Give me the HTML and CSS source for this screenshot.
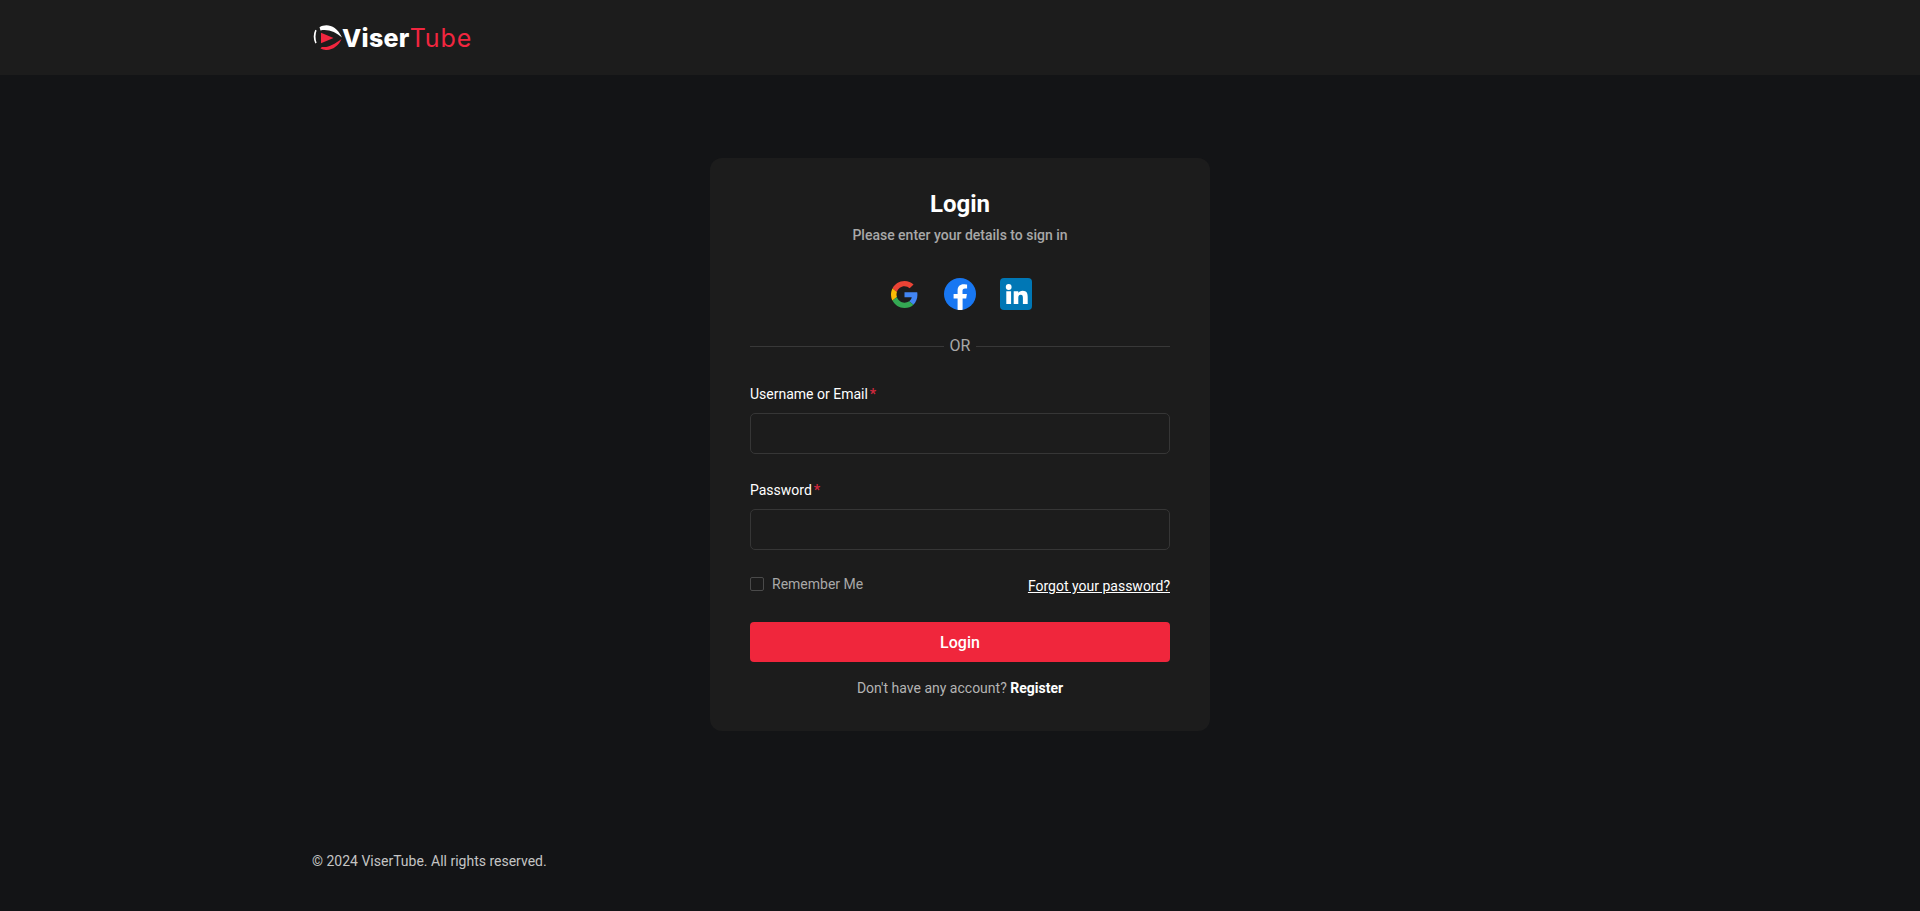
FILE: index.html
```html
<!DOCTYPE html>
<html>
  <head>
    <title>Login - ViserTube</title>
    <link rel="stylesheet" href="styles.css">
  </head>
  <body>
    <header class="topbar">
      <div class="container">
        <a class="logo" href="#">
          <svg class="logo-icon" viewBox="0 0 30 25" width="30" height="25">
            <path d="M2.300 4.800Q-.9 11.500 2.300 18.500L3.600 17.700Q1.400 11.500 3.600 5.600Z" fill="#fff"/>
            <path d="M6.500 2.200C13 -1.600 23 -.5 29 12.600 23 6.800 15 3.800 7.500 5.400Z" fill="#fff"/>
            <path d="M28.500 14C25 23 15 27.500 7.500 23.600L8.800 21.900C15 23 21 19.500 28.500 14Z" fill="#f1263f"/>
            <path d="M8 7.800 20.500 13 8 18.300Z" fill="#f1263f"/>
          </svg>
          <span class="logo-text"><b>Viser</b><span>Tube</span></span>
        </a>
      </div>
    </header>

    <main class="main">
      <div class="card">
        <h2 class="card-title">Login</h2>
        <p class="card-sub">Please enter your details to sign in</p>

        <div class="social">
          <a href="#" class="social-link">
            <svg viewBox="0 0 48 48" width="27" height="27">
              <path fill="#EA4335" d="M24 9.500c3.540 0 6.710 1.220 9.210 3.600l6.850-6.850C35.900 2.380 30.470 0 24 0 14.620 0 6.510 5.380 2.560 13.220l7.980 6.190C12.430 13.720 17.740 9.500 24 9.500z"/>
              <path fill="#4285F4" d="M46.980 24.550c0-1.570-.15-3.090-.38-4.550H24v9.020h12.940c-.58 2.960-2.260 5.480-4.780 7.180l7.730 6c4.510-4.180 7.090-10.360 7.090-17.650z"/>
              <path fill="#FBBC05" d="M10.530 28.590c-.48-1.450-.76-2.990-.76-4.590s.27-3.140.76-4.590l-7.980-6.190C.92 16.460 0 20.120 0 24c0 3.880.92 7.540 2.560 10.780l7.970-6.190z"/>
              <path fill="#34A853" d="M24 48c6.480 0 11.930-2.130 15.890-5.810l-7.730-6c-2.150 1.450-4.920 2.300-8.160 2.300-6.260 0-11.570-4.220-13.470-9.910l-7.980 6.190C6.510 42.620 14.620 48 24 48z"/>
            </svg>
          </a>
          <a href="#" class="social-link">
            <svg viewBox="0 0 32 32" width="32" height="32">
              <circle cx="16" cy="16" r="16" fill="#1877f2"/>
              <path fill="#fff" d="M22.200 20.600l.7-4.600h-4.400v-3c0-1.300.6-2.500 2.600-2.500h2v-3.900s-1.800-.3-3.500-.3c-3.600 0-6 2.200-6 6.200V16h-4v4.600h4v11.200c.8.100 1.600.2 2.500.2s1.700-.1 2.500-.2V20.600z"/>
            </svg>
          </a>
          <a href="#" class="social-link">
            <svg viewBox="0 0 32 32" width="32" height="32">
              <rect width="32" height="32" rx="4" fill="#0077b5"/>
              <circle cx="8.700" cy="9" r="2.900" fill="#fff"/>
              <path fill="#fff" d="M6.300 13.200h4.800V26H6.300zM13.700 13.200h4.600v1.800c.7-1.200 2.300-2.200 4.300-2.200 4.300 0 5.100 2.800 5.100 6.500V26h-4.800v-5.800c0-1.700-.1-3.500-2.200-3.500s-2.400 1.600-2.400 3.400V26h-4.600z"/>
            </svg>
          </a>
        </div>

        <div class="or-line"><span>OR</span></div>

        <form class="form">
          <div class="field">
            <label for="username">Username or Email<span class="req">*</span></label>
            <input type="text" id="username">
          </div>
          <div class="field">
            <label for="password">Password<span class="req">*</span></label>
            <input type="password" id="password">
          </div>
          <div class="form-row">
            <label class="remember"><input type="checkbox" id="remember">Remember Me</label>
            <a href="#" class="forgot">Forgot your password?</a>
          </div>
          <button type="button" class="btn-login">Login</button>
        </form>

        <p class="register">Don't have any account? <a href="#">Register</a></p>
      </div>
    </main>

    <footer class="footer">
      <div class="container">
        <p>&copy; 2024 ViserTube. All rights reserved.</p>
      </div>
    </footer>
  </body>
</html>
```

FILE: styles.css
```css
* {
  box-sizing: border-box;
}

body {
  margin: 0;
  min-height: 911px;
  display: flex;
  flex-direction: column;
  background-color: #131416;
  font-family: Roboto, "Liberation Sans", sans-serif;
  font-size: 14px;
  color: #fff;
}

a {
  color: #fff;
}

.container {
  width: 1320px;
  margin: 0 auto;
  padding: 0 12px;
}

.topbar {
  height: 75px;
  background-color: #1c1c1c;
  display: flex;
  align-items: center;
}

.logo {
  display: flex;
  align-items: center;
  margin-left: 1px;
  text-decoration: none;
}

.logo-icon {
  flex: none;
}

.logo-text {
  margin-left: -1px;
  font-family: Inter, sans-serif;
  font-size: 25px;
  line-height: 26px;
}

.logo-text b {
  font-weight: 800;
  letter-spacing: 0.3px;
  color: #fff;
}

.logo-text span {
  font-weight: 400;
  letter-spacing: 0.9px;
  color: #f1263f;
}

.main {
  flex: 1;
  display: flex;
  justify-content: center;
  padding-top: 83px;
}

.card {
  width: 500px;
  height: 573px;
  padding: 31px 40px;
  background-color: #1c1c1c;
  border-radius: 12px;
  text-align: center;
}

.card-title {
  margin: 0;
  font-size: 24px;
  line-height: 30px;
  font-weight: 700;
}

.card-sub {
  margin: 6px 0 0;
  font-size: 14px;
  line-height: 20px;
  font-weight: 500;
  color: #a8a8a8;
}

.social {
  display: flex;
  justify-content: center;
  align-items: center;
  gap: 24px;
  margin-top: 33px;
}

.social-link {
  display: flex;
  width: 32px;
  height: 32px;
  align-items: center;
  justify-content: center;
}

.or-line {
  display: flex;
  align-items: center;
  gap: 6px;
  margin-top: 24px;
  font-size: 16px;
  line-height: 24px;
  color: #a8a8a8;
}

.or-line::before,
.or-line::after {
  content: "";
  flex: 1;
  height: 1px;
  background-color: #383838;
}

.form {
  margin-top: 26px;
  text-align: left;
}

.field {
  margin-bottom: 26px;
}

.field label {
  display: block;
  margin-bottom: 9px;
  font-size: 14px;
  line-height: 20px;
  color: #fff;
}

.req {
  margin-left: 2px;
  font-weight: 700;
  color: #d0283d;
}

.field input {
  display: block;
  width: 100%;
  height: 41px;
  background: transparent;
  border: 1px solid #363636;
  border-radius: 5px;
  color: #fff;
}

.form-row {
  display: flex;
  justify-content: space-between;
  align-items: center;
  margin-top: -4px;
}

.remember {
  display: flex;
  align-items: center;
  gap: 8px;
  font-size: 14px;
  line-height: 20px;
  color: #a8a8a8;
}

.remember input {
  appearance: none;
  width: 14px;
  height: 14px;
  margin: 0;
  border: 1px solid #4a4a4a;
  border-radius: 2px;
  background: transparent;
}

.forgot {
  margin-top: 4px;
  font-size: 14px;
  line-height: 20px;
}

.btn-login {
  display: block;
  width: 100%;
  height: 40px;
  margin-top: 26px;
  background-color: #f0263c;
  border: none;
  border-radius: 4px;
  color: #fff;
  font-family: inherit;
  font-size: 16px;
  font-weight: 500;
}

.register {
  margin: 16px 0 0;
  font-size: 14px;
  line-height: 20px;
  color: #b4b4b4;
}

.register a {
  font-weight: 700;
  text-decoration: none;
}

.footer {
  height: 60px;
  color: #c4c4c4;
}

.footer p {
  margin: 0;
  font-size: 14px;
  line-height: 20px;
}
```
